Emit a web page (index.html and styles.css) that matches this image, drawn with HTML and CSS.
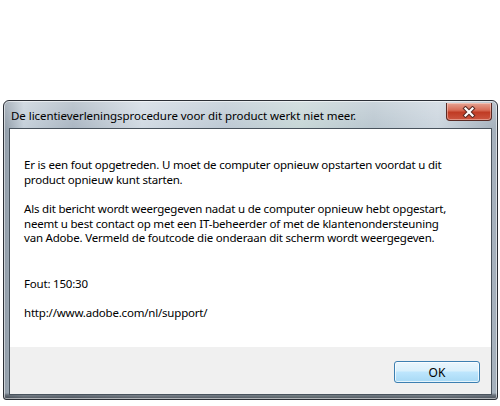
FILE: index.html
```html
<!DOCTYPE html>
<html>
<head>
<meta charset="utf-8">
<link rel="stylesheet" href="styles.css">
</head>
<body>
<div class="window">
  <div class="titlebar">
    <span class="title">De licentieverleningsprocedure voor dit product werkt niet meer.</span>
    <div class="close">
      <svg width="16" height="12" viewBox="0 0 16 12">
        <path d="M4.5 2.5 L11.5 9.5 M11.5 2.5 L4.5 9.5" stroke="#5b2a24" stroke-width="4.2" stroke-linecap="square"/>
        <path d="M4.5 2.5 L11.5 9.5 M11.5 2.5 L4.5 9.5" stroke="#ffffff" stroke-width="2.2" stroke-linecap="square"/>
      </svg>
    </div>
  </div>
  <div class="client">
    <div class="content">
      <p>Er is een fout opgetreden. U moet de computer opnieuw opstarten voordat u dit product opnieuw kunt starten.</p>
      <p>Als dit bericht wordt weergegeven nadat u de computer opnieuw hebt opgestart, neemt u best contact op met een IT-beheerder of met de klantenondersteuning van Adobe. Vermeld de foutcode die onderaan dit scherm wordt weergegeven.</p>
      <p class="code">Fout: 150:30</p>
      <p>http://www.adobe.com/nl/support/</p>
    </div>
    <div class="footer">
      <button class="ok">OK</button>
    </div>
  </div>
</div>
</body>
</html>
```

FILE: styles.css
```css
html, body {
  margin: 0;
  padding: 0;
  background: #ffffff;
}
body {
  width: 500px;
  height: 406px;
  overflow: hidden;
  font-family: "Noto Sans", "Open Sans", sans-serif;
}
.window {
  margin: 100px 0 0 3px;
  width: 495px;
  height: 300px;
  box-sizing: border-box;
  border: 1px solid #2b2f36;
  border-radius: 6px 6px 3px 3px;
  background:
    linear-gradient(0deg, rgba(40,46,54,0.75) 0px, rgba(60,66,74,0.55) 4px, rgba(0,0,0,0) 6px),
    linear-gradient(180deg, rgba(255,255,255,0.25) 0%, rgba(255,255,255,0) 10%),
    linear-gradient(90deg, #8e9aa6 0%, #c4cfd9 4%, #a9b5c1 14%, #d0d9e2 28%, #bcc8d3 45%, #c6d6d6 60%, #b9c6cf 75%, #cbd5de 88%, #a3afbb 100%);
  display: flex;
  flex-direction: column;
  padding: 0 5px 4px 5px;
  box-shadow: inset 0 0 0 1px rgba(255,255,255,0.55);
}
.titlebar {
  height: 27px;
  display: flex;
  align-items: flex-start;
  justify-content: space-between;
}
.title {
  font-size: 11.5px;
  color: #000;
  margin-top: 7px;
  margin-left: 2px;
  letter-spacing: -0.05px;
}
.close {
  width: 46px;
  height: 18px;
  margin-top: 2px;
  border: 1px solid #5a2a24;
  border-top: none;
  border-radius: 0 0 4px 4px;
  box-sizing: border-box;
  background: linear-gradient(180deg, #e6a494 0%, #d86c56 42%, #c03b24 55%, #cc5640 100%);
  display: flex;
  align-items: center;
  justify-content: center;
  box-shadow: inset 0 0 0 1px rgba(255,225,215,0.45);
}
.client {
  flex: 1;
  background: #ffffff;
  border: 1px solid #48525c;
  display: flex;
  flex-direction: column;
}
.content {
  flex: 1;
  padding: 29px 38px 0 14px;
  font-size: 11.5px;
  letter-spacing: -0.2px;
  line-height: 14.5px;
  color: #000;
}
.content p {
  margin: 0 0 15px 0;
}
.content p.code {
  margin-top: 31px;
}
.footer {
  height: 47px;
  background: #f0f0f0;
  display: flex;
  align-items: flex-start;
  justify-content: flex-end;
  padding: 14px 11px 0 0;
  box-sizing: border-box;
}
.ok {
  width: 86px;
  height: 22px;
  font-family: "Noto Sans", sans-serif;
  font-size: 12px;
  color: #000;
  border: 1px solid #3c7fb1;
  border-radius: 3px;
  background: linear-gradient(180deg, #eaf6fd 0%, #d9f0fc 45%, #bee6fd 50%, #a7d9f5 100%);
  box-shadow: inset 0 0 0 1px rgba(255,255,255,0.7);
  padding: 0;
}
```
